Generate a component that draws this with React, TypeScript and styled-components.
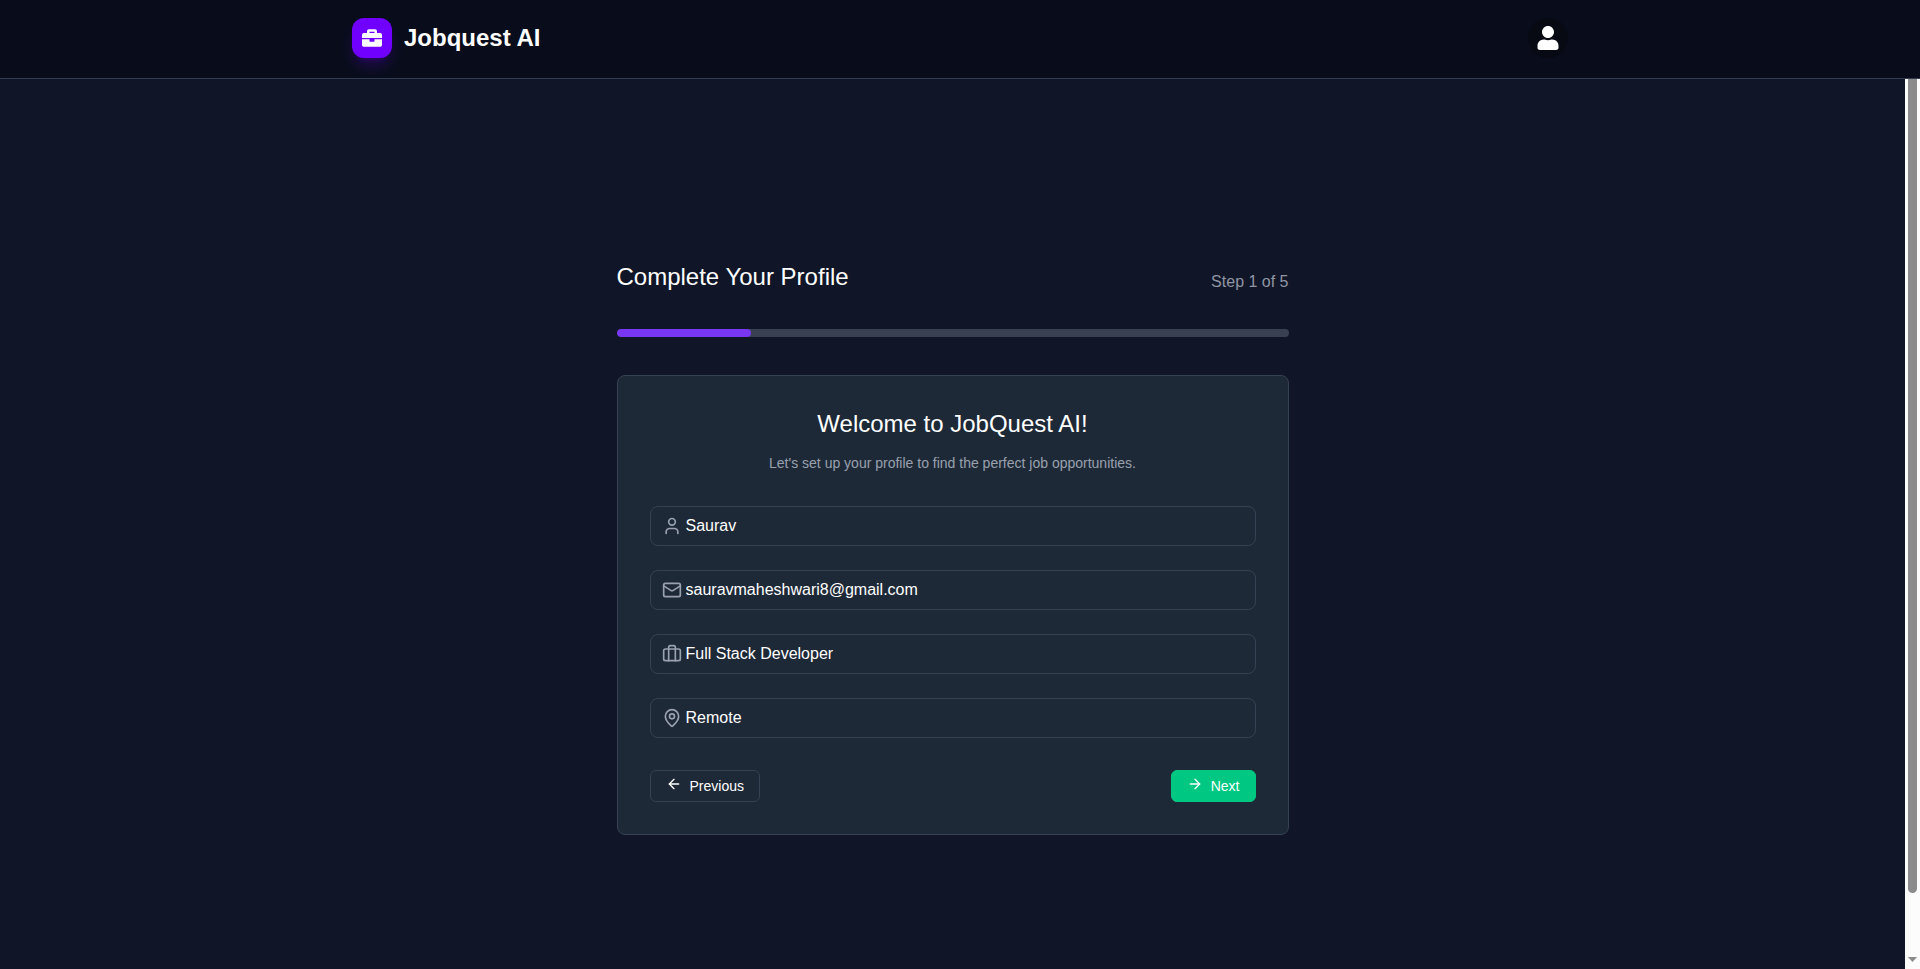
import React from "react";
import styled, { createGlobalStyle } from "styled-components";
import { ArrowLeft, ArrowRight, Briefcase, Mail, MapPin, User } from "lucide-react";
import { FaBriefcase, FaUser } from "react-icons/fa";

const GlobalStyle = createGlobalStyle`
  * { box-sizing: border-box; }
  body {
    margin: 0;
    overflow: hidden;
    background: #101627;
    color: #fff;
    font-family: "Liberation Sans", Arial, sans-serif;
  }
  button, input { font-family: inherit; }
  h1, h2, h3, p { margin: 0; font-weight: 400; }
`;

const Page = styled.div`
  height: 969px;
  display: flex;
  flex-direction: column;
`;

const Header = styled.header`
  height: 79px;
  flex: none;
  background: #090d1b;
  border-bottom: 1px solid #333d51;
`;

const HeaderInner = styled.div`
  width: 1280px;
  height: 76px;
  margin: 0 auto;
  padding: 0 32px;
  display: flex;
  align-items: center;
  justify-content: space-between;
`;

const Brand = styled.div`
  display: flex;
  align-items: center;
  gap: 12px;
`;

const LogoBox = styled.div`
  width: 40px;
  height: 40px;
  border-radius: 12px;
  background: #7000ff;
  display: grid;
  place-items: center;
  font-size: 20px;
  box-shadow: 0 10px 15px -3px rgba(112, 0, 255, 0.25), 0 4px 6px -4px rgba(112, 0, 255, 0.25);
`;

const BrandName = styled.h1`
  font-size: 24px;
  line-height: 32px;
  font-weight: 700;
`;

const Avatar = styled.button`
  width: 40px;
  height: 40px;
  padding: 0;
  border: 0;
  border-radius: 50%;
  background: #070913;
  color: #fff;
  font-size: 24px;
  display: grid;
  place-items: center;
`;

const Body = styled.div`
  flex: 1;
  display: flex;
  min-height: 0;
`;

const Main = styled.main`
  flex: 1;
  padding-top: 179px;
`;

const Content = styled.section`
  width: 672px;
  margin: 0 auto;
`;

const TitleRow = styled.div`
  display: flex;
  justify-content: space-between;
  align-items: flex-start;
  height: 71px;
`;

const Title = styled.h2`
  font-size: 24px;
  line-height: 38px;
`;

const Step = styled.span`
  margin-top: 12px;
  font-size: 16px;
  line-height: 24px;
  color: #9095a4;
`;

const Track = styled.div`
  height: 8px;
  border-radius: 4px;
  background: #384052;
  overflow: hidden;
`;

const Fill = styled.div`
  height: 100%;
  border-radius: 4px;
  background: #7936f3;
`;

const Card = styled.div`
  margin-top: 38px;
  height: 460px;
  padding: 32px;
  border: 1px solid #364153;
  border-radius: 8px;
  background: #1e2937;
`;

const Welcome = styled.h3`
  font-size: 24px;
  line-height: 32px;
  text-align: center;
`;

const Lead = styled.p`
  margin-top: 12px;
  font-size: 14px;
  line-height: 22px;
  text-align: center;
  color: #99a1af;
`;

const Fields = styled.div`
  margin-top: 32px;
  display: flex;
  flex-direction: column;
  gap: 24px;
`;

const Field = styled.label`
  height: 40px;
  padding: 0 11px;
  border: 1px solid #364153;
  border-radius: 8px;
  display: flex;
  align-items: center;
  gap: 4px;
  color: #99a1af;
  svg { flex: none; }
`;

const Input = styled.input`
  flex: 1;
  min-width: 0;
  padding: 0;
  border: 0;
  outline: 0;
  background: transparent;
  color: #fff;
  font-size: 16px;
  line-height: 24px;
`;

const Actions = styled.div`
  margin-top: 32px;
  display: flex;
  justify-content: space-between;
`;

const Button = styled.button<{ $primary?: boolean }>`
  height: 32px;
  padding: 0 15px;
  border: 1px solid ${(p) => (p.$primary ? "#00c781" : "#364153")};
  border-radius: 6px;
  background: ${(p) => (p.$primary ? "#00c781" : "transparent")};
  color: #fff;
  font-size: 14px;
  line-height: 22px;
  display: flex;
  align-items: center;
  gap: 8px;
  svg { margin-bottom: 4px; }
`;

const Scrollbar = styled.div`
  width: 15px;
  padding: 0 3px 7px;
  background: #fcfcfc;
  display: flex;
  flex-direction: column;
  justify-content: space-between;
`;

const Thumb = styled.div`
  height: 814px;
  border-radius: 0 0 5px 5px;
  background: #8b8b8b;
`;

const ArrowDown = styled.svg`
  display: block;
  width: 9px;
  height: 5px;
`;

const fields = [
  { Icon: User, value: "Saurav" },
  { Icon: Mail, value: "sauravmaheshwari8@gmail.com" },
  { Icon: Briefcase, value: "Full Stack Developer" },
  { Icon: MapPin, value: "Remote" },
];

const step = 1;
const totalSteps = 5;

export default function App() {
  return (
    <Page>
      <GlobalStyle />
      <Header>
        <HeaderInner>
          <Brand>
            <LogoBox><FaBriefcase /></LogoBox>
            <BrandName>Jobquest AI</BrandName>
          </Brand>
          <Avatar aria-label="Account"><FaUser /></Avatar>
        </HeaderInner>
      </Header>
      <Body>
        <Main>
          <Content>
            <TitleRow>
              <Title>Complete Your Profile</Title>
              <Step>{`Step ${step} of ${totalSteps}`}</Step>
            </TitleRow>
            <Track>
              <Fill style={{ width: `${(step / totalSteps) * 100}%` }} />
            </Track>
            <Card>
              <Welcome>Welcome to JobQuest AI!</Welcome>
              <Lead>Let's set up your profile to find the perfect job opportunities.</Lead>
              <Fields>
                {fields.map(({ Icon, value }) => (
                  <Field key={value}>
                    <Icon size={20} />
                    <Input defaultValue={value} spellCheck={false} />
                  </Field>
                ))}
              </Fields>
              <Actions>
                <Button><ArrowLeft size={16} />Previous</Button>
                <Button $primary><ArrowRight size={16} />Next</Button>
              </Actions>
            </Card>
          </Content>
        </Main>
        <Scrollbar>
          <Thumb />
          <ArrowDown viewBox="0 0 9 5"><path d="M0 0h9L4.5 5z" fill="#8b8b8b" /></ArrowDown>
        </Scrollbar>
      </Body>
    </Page>
  );
}
